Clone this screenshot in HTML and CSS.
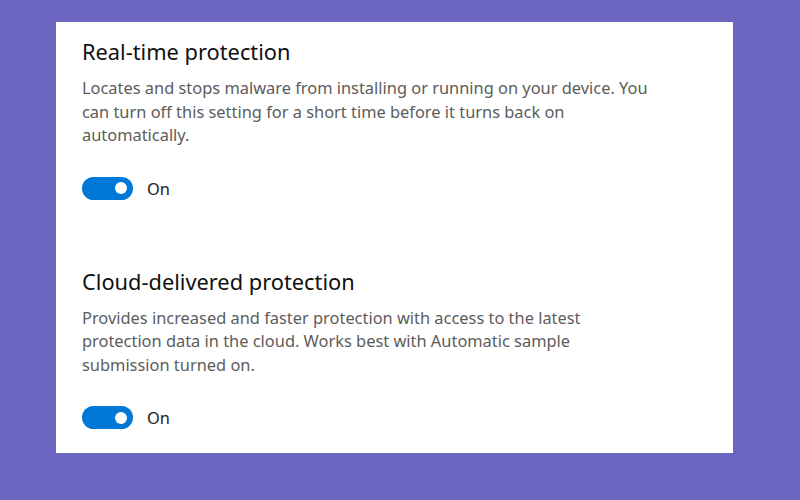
FILE: index.html
```html
<!DOCTYPE html>
<html lang="en">
<head>
<meta charset="utf-8">
<title>Virus &amp; threat protection settings</title>
<link rel="stylesheet" href="styles.css">
</head>
<body>
  <main class="card">
    <section class="setting">
      <h2 class="setting-title">Real-time protection</h2>
      <p class="setting-desc">Locates and stops malware from installing or running on your device. You can turn off this setting for a short time before it turns back on automatically.</p>
      <div class="toggle-row">
        <span class="toggle is-on" role="switch" aria-checked="true"><span class="knob"></span></span>
        <span class="toggle-label">On</span>
      </div>
    </section>
    <section class="setting">
      <h2 class="setting-title">Cloud-delivered protection</h2>
      <p class="setting-desc">Provides increased and faster protection with access to the latest protection data in the cloud. Works best with Automatic sample submission turned on.</p>
      <div class="toggle-row">
        <span class="toggle is-on" role="switch" aria-checked="true"><span class="knob"></span></span>
        <span class="toggle-label">On</span>
      </div>
    </section>
  </main>
</body>
</html>
```
FILE: styles.css
```css
html, body {
  margin: 0;
  padding: 0;
}
body {
  background: #6c66c1;
  width: 800px;
  height: 500px;
  overflow: hidden;
  font-family: "Noto Sans", "Open Sans", sans-serif;
}
.card {
  box-sizing: border-box;
  margin: 22px 0 0 56px;
  width: 677px;
  height: 431px;
  background: #ffffff;
  padding: 16px 0 0 26px;
  display: flex;
  flex-direction: column;
  gap: 68px;
}
.setting-title {
  margin: 0 0 10px;
  font-size: 21.8px;
  line-height: 28px;
  font-weight: 400;
  color: #111;
}
.setting-desc {
  margin: 0 0 30px;
  max-width: 570px;
  font-size: 16.4px;
  line-height: 23.5px;
  color: #5c5c5c;
}
.toggle-row {
  display: flex;
  align-items: center;
  gap: 14px;
  height: 23px;
}
.toggle {
  box-sizing: border-box;
  width: 51px;
  height: 23px;
  border-radius: 12px;
  background: #0078d7;
  display: flex;
  align-items: center;
  justify-content: flex-end;
  padding-right: 6px;
}
.knob {
  width: 12px;
  height: 12px;
  border-radius: 50%;
  background: #fff;
}
.toggle-label {
  font-size: 16.4px;
  color: #222;
}
```
